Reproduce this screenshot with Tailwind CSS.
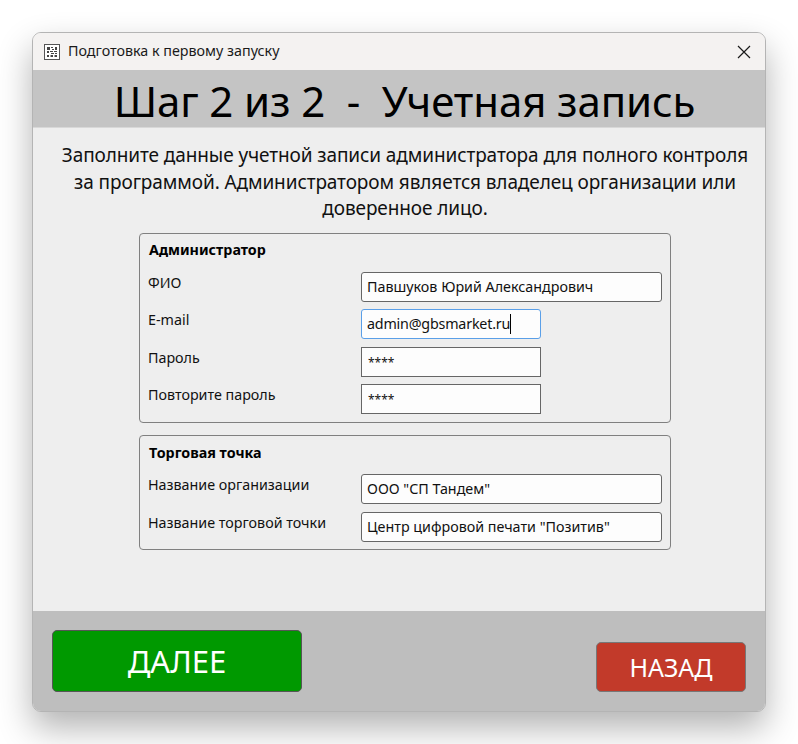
<!DOCTYPE html>
<html lang="ru">
<head>
    <meta charset="UTF-8">
    <title>Подготовка к первому запуску</title>
    <script src="https://cdn.jsdelivr.net/npm/@tailwindcss/browser@4"></script>
</head>
<body class="bg-white font-['Noto_Sans','Open_Sans',sans-serif] overflow-hidden">
    <div class="w-[798px] h-[744px] pt-[32px] pl-[32px]">
        <div class="w-[734px] h-[680px] flex flex-col rounded-[9px] overflow-hidden border border-[#b4b4b4] bg-[#eeeeee] shadow-[0_16px_34px_rgba(0,0,0,0.3)]">
            <!-- title bar -->
            <div class="h-[37px] shrink-0 flex items-center bg-[#f4f2f1] pl-[11px] pr-[14px]">
                <svg width="16" height="16" viewBox="0 0 16 16" class="shrink-0">
                    <rect x="0.5" y="0.5" width="15" height="15" fill="#fff" stroke="#555"/>
                    <path d="M3 3h3v3H3zM7 3h2v1H7zM8 5h2v1H8zM11 3h2v3h-2zM6 7h3v1H6zM3 7h2v2H3zM10 7h3v1h-3zM7 9h3v1H7zM11 9h2v1h-2zM3 11h2v2H3zM6.500 11h2.500v2H6.500zM10.500 11h2.500v2h-2.500z" fill="#444"/>
                </svg>
                <span class="ml-[8px] text-[14.300px] leading-none text-[#1a1a1a]">Подготовка к первому запуску</span>
                <svg width="14" height="14" viewBox="0 0 14 14" class="ml-auto">
                    <path d="M1 1l12 12M13 1L1 13" stroke="#1a1a1a" stroke-width="1.200" fill="none"/>
                </svg>
            </div>

            <!-- header -->
            <div class="h-[58px] shrink-0 flex items-center justify-center bg-[#c4c4c4] border-b border-[#d8d8d8] pt-[4px] pl-[11px]">
                <h1 class="text-[42px] leading-none text-black whitespace-pre tracking-[-0.12px]">Шаг 2 из 2  -  Учетная запись</h1>
            </div>

            <!-- content -->
            <div class="flex-1 flex flex-col items-center pl-[12px]">
                <p class="mt-[14px] w-[700px] text-center text-[19px] leading-[26.500px] text-[#111] tracking-[-0.1px]">Заполните данные учетной записи администратора для полного контроля за программой. Администратором является владелец организации или доверенное лицо.</p>

                <div class="mt-[11px] w-[532px] h-[190px] rounded-[4px] border border-[#808080] pl-[8px] flex flex-col">
                    <div class="h-[38px] pt-[7px] pl-[1px] text-[14.300px] font-bold leading-[18px] text-black">Администратор</div>
                    <div class="flex h-[30px]">
                        <label class="w-[213px] text-[14.300px] leading-[22px] text-[#111]">ФИО</label>
                        <div class="w-[301px] h-[30px] rounded-[3px] border border-[#666] bg-[#fdfdfd] pl-[5px] text-[14.300px] leading-[28px] text-[#111]">Павшуков Юрий Александрович</div>
                    </div>
                    <div class="flex h-[30px] mt-[7px]">
                        <label class="w-[213px] text-[14.300px] leading-[22px] text-[#111]">E-mail</label>
                        <div class="w-[180px] h-[30px] rounded-[3px] border border-[#5a9fe8] bg-[#fdfdfd] pl-[5px] text-[14.300px] leading-[28px] text-[#111] tracking-[-0.2px] flex items-center"><span>admin@gbsmarket.ru</span><span class="w-px h-[20px] bg-black"></span></div>
                    </div>
                    <div class="flex h-[30px] mt-[8px]">
                        <label class="w-[213px] text-[14.300px] leading-[22px] text-[#111]">Пароль</label>
                        <div class="w-[180px] h-[30px] border border-[#666] bg-[#fdfdfd] pl-[6px] text-[12px] leading-[30px] text-[#111]">****</div>
                    </div>
                    <div class="flex h-[30px] mt-[7px]">
                        <label class="w-[213px] text-[14.300px] leading-[22px] text-[#111]">Повторите пароль</label>
                        <div class="w-[180px] h-[30px] border border-[#666] bg-[#fdfdfd] pl-[6px] text-[12px] leading-[30px] text-[#111]">****</div>
                    </div>
                </div>

                <div class="mt-[12px] w-[532px] h-[115px] rounded-[4px] border border-[#808080] pl-[8px] flex flex-col">
                    <div class="h-[38px] pt-[8px] pl-[1px] text-[14.300px] font-bold leading-[18px] text-black">Торговая точка</div>
                    <div class="flex h-[30px]">
                        <label class="w-[213px] text-[14.300px] leading-[22px] text-[#111]">Название организации</label>
                        <div class="w-[301px] h-[30px] rounded-[3px] border border-[#666] bg-[#fdfdfd] pl-[5px] text-[14.300px] leading-[28px] text-[#111]">ООО "СП Тандем"</div>
                    </div>
                    <div class="flex h-[30px] mt-[8px]">
                        <label class="w-[213px] text-[14.300px] leading-[22px] text-[#111]">Название торговой точки</label>
                        <div class="w-[301px] h-[30px] rounded-[3px] border border-[#666] bg-[#fdfdfd] pl-[5px] text-[14.300px] leading-[28px] text-[#111]">Центр цифровой печати "Позитив"</div>
                    </div>
                </div>
            </div>

            <!-- footer -->
            <div class="h-[100px] shrink-0 bg-[#bebebe] flex justify-between items-start px-[19px] pt-[19px]">
                <button class="w-[250px] h-[62px] rounded-[5px] border border-[#555] bg-[#009900] text-white text-[31px] leading-none">ДАЛЕЕ</button>
                <button class="mt-[12px] w-[150px] h-[50px] rounded-[5px] border border-[#777] bg-[#c23a2a] text-white text-[25px] leading-none">НАЗАД</button>
            </div>
        </div>
    </div>
</body>
</html>
